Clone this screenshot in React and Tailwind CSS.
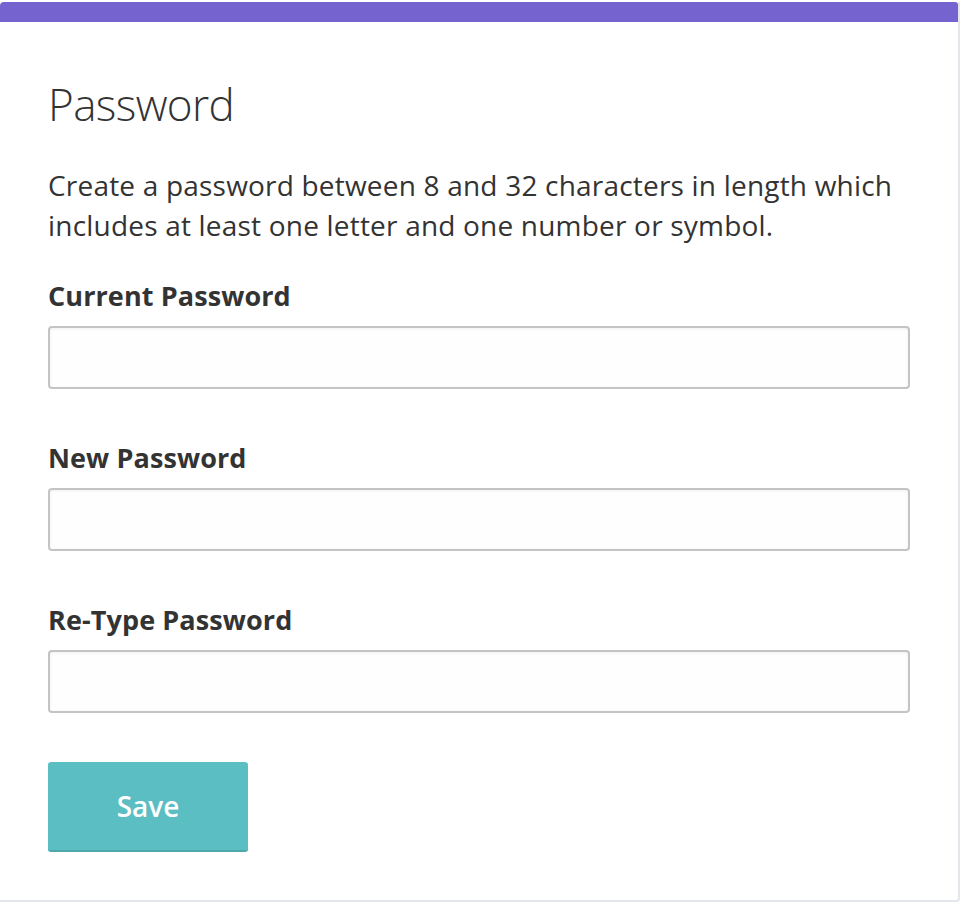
const fields = ['Current Password', 'New Password', 'Re-Type Password']

export default function App() {
  return (
    <div className="min-h-[902px] bg-white pt-[2px] font-['Open_Sans','Lato',sans-serif] text-[#333]">
      <div className="w-[960px] h-[900px] border-r-2 border-b-2 border-[#e3e7eb] rounded-br-[4px]">
        <div className="h-[20px] bg-[#7563cf] rounded-tl-[4px] rounded-tr-[3px] w-[958px]" />
        <div className="px-[48px]">
          <h1 className="mt-[52px] text-[44px] leading-[60px] font-light tracking-[-0.6px]">Password</h1>
          <p className="mt-[31px] text-[28px] leading-[40px] tracking-[0.2px]">
            Create a password between 8 and 32 characters in length which
            <br />
            includes at least one letter and one number or symbol.
          </p>
          <div className="mt-[33px] flex flex-col gap-[51px]">
            {fields.map((f) => (
              <div key={f}>
                <label className="block text-[27px] leading-[36px] font-bold tracking-[0.1px]">{f}</label>
                <input
                  type="password"
                  className="mt-[12px] block w-[862px] h-[63px] border-2 border-[#c4c4c4] rounded-[4px] bg-[#fefefe] shadow-[inset_0_1px_3px_rgba(0,0,0,0.06)]"
                />
              </div>
            ))}
          </div>
          <button className="mt-[49px] w-[200px] h-[90px] rounded-[3px] bg-[#5bbec2] border-b-2 border-[#4fa9ac] text-white text-[28px] font-semibold">
            Save
          </button>
        </div>
      </div>
    </div>
  )
}
